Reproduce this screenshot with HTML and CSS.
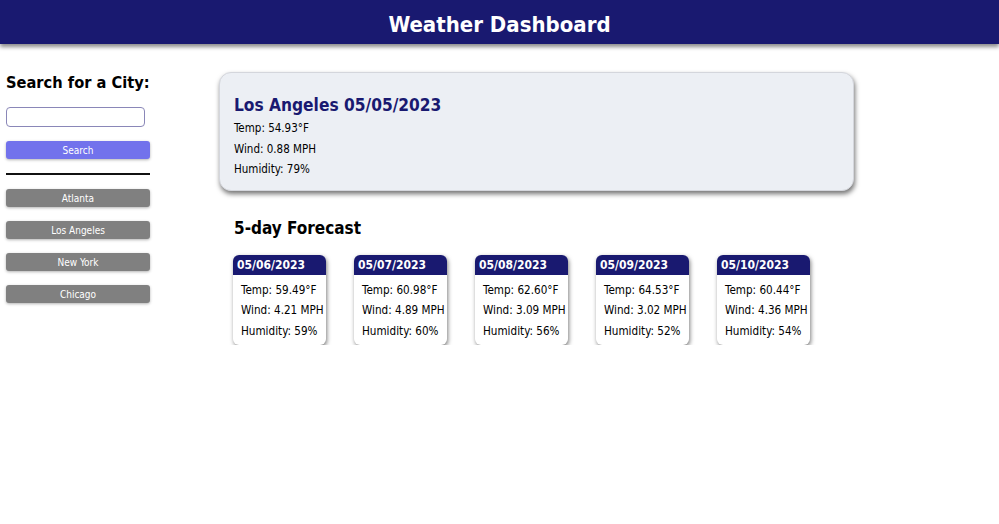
FILE: index.html
```html
<!DOCTYPE html>
<html lang="en">
<head>
<meta charset="utf-8">
<title>Weather Dashboard</title>
<link rel="stylesheet" href="styles.css">
</head>
<body>
<header class="topbar"><h1>Weather Dashboard</h1></header>
<div class="layout">
  <aside class="sidebar">
    <h2 class="side-title">Search for a City:</h2>
    <input class="city-input" type="text">
    <button class="btn btn-search">Search</button>
    <div class="divider"></div>
    <div class="history">
      <button class="btn btn-city">Atlanta</button>
      <button class="btn btn-city">Los Angeles</button>
      <button class="btn btn-city">New York</button>
      <button class="btn btn-city">Chicago</button>
    </div>
  </aside>
  <main class="main">
    <section class="current">
      <h2 class="current-title">Los Angeles 05/05/2023</h2>
      <p class="line">Temp: 54.93°F</p>
      <p class="line">Wind: 0.88 MPH</p>
      <p class="line">Humidity: 79%</p>
    </section>
    <h3 class="forecast-title">5-day Forecast</h3>
    <div class="forecast">
      <div class="day"><div class="day-head">05/06/2023</div><div class="day-body"><p>Temp: 59.49°F</p><p>Wind: 4.21 MPH</p><p>Humidity: 59%</p></div></div>
      <div class="day"><div class="day-head">05/07/2023</div><div class="day-body"><p>Temp: 60.98°F</p><p>Wind: 4.89 MPH</p><p>Humidity: 60%</p></div></div>
      <div class="day"><div class="day-head">05/08/2023</div><div class="day-body"><p>Temp: 62.60°F</p><p>Wind: 3.09 MPH</p><p>Humidity: 56%</p></div></div>
      <div class="day"><div class="day-head">05/09/2023</div><div class="day-body"><p>Temp: 64.53°F</p><p>Wind: 3.02 MPH</p><p>Humidity: 52%</p></div></div>
      <div class="day"><div class="day-head">05/10/2023</div><div class="day-body"><p>Temp: 60.44°F</p><p>Wind: 4.36 MPH</p><p>Humidity: 54%</p></div></div>
    </div>
  </main>
</div>
</body>
</html>
```
FILE: styles.css
```css
* { box-sizing: border-box; }
body {
  margin: 0;
  font-family: "DejaVu Sans Condensed", "DejaVu Sans", sans-serif;
  color: #000;
  background: #fff;
}
.topbar {
  background: #191970;
  height: 44px;
  box-shadow: 0 3px 4px rgba(0,0,0,0.45);
  display: flex;
  align-items: center;
  justify-content: center;
  padding-top: 5px;
}
.topbar h1 {
  margin: 0;
  color: #fff;
  font-size: 22px;
  font-weight: bold;
}
.layout {
  display: flex;
  padding-top: 28px;
}
.sidebar {
  width: 219px;
  padding-left: 6px;
  flex: none;
}
.side-title {
  margin: 0;
  font-size: 16.3px;
  font-weight: bold;
  line-height: 22px;
}
.city-input {
  display: block;
  margin-top: 13px;
  width: 139px;
  height: 20px;
  border: 1px solid #8a87b8;
  border-radius: 4px;
  background: #fff;
}
.btn {
  display: block;
  width: 144px;
  height: 18px;
  border: none;
  border-radius: 3px;
  color: #fff;
  font-family: "DejaVu Sans Condensed", sans-serif;
  font-size: 10px;
  padding: 0;
  box-shadow: 0 1px 3px rgba(0,0,0,0.3);
}
.btn-search {
  margin-top: 14px;
  background: #7272ec;
}
.divider {
  width: 144px;
  height: 0;
  border-top: 2px solid #111;
  margin-top: 14px;
}
.history {
  display: flex;
  flex-direction: column;
  gap: 14px;
  margin-top: 14px;
}
.btn-city { background: #808080; }
.main {
  flex: 1;
}
.current {
  width: 635px;
  background: #eceff4;
  border: 1px solid #d4d6dc;
  border-radius: 12px;
  box-shadow: 1px 3px 5px rgba(0,0,0,0.55);
  padding: 20px 14px 10px;
}
.current-title {
  margin: 0 0 1px;
  color: #191970;
  font-size: 17.2px;
  line-height: 24px;
  font-weight: bold;
}
.line {
  margin: 0;
  font-size: 11.5px;
  line-height: 20.5px;
}
.forecast-title {
  margin: 26px 0 0 15px;
  font-size: 17px;
  line-height: 22px;
  font-weight: bold;
}
.forecast {
  display: flex;
  gap: 28px;
  margin: 16px 0 0 14px;
}
.day {
  width: 93px;
  border-radius: 6px;
  background: #fff;
  box-shadow: 1px 2px 4px rgba(0,0,0,0.5);
  overflow: hidden;
}
.day-head {
  background: #191970;
  color: #fff;
  font-weight: bold;
  font-size: 12px;
  line-height: 20px;
  padding-left: 4px;
  white-space: nowrap;
}
.day-body {
  padding: 5px 0 4px 8px;
}
.day-body p {
  margin: 0;
  font-size: 11.6px;
  line-height: 20.5px;
  white-space: nowrap;
}
```
